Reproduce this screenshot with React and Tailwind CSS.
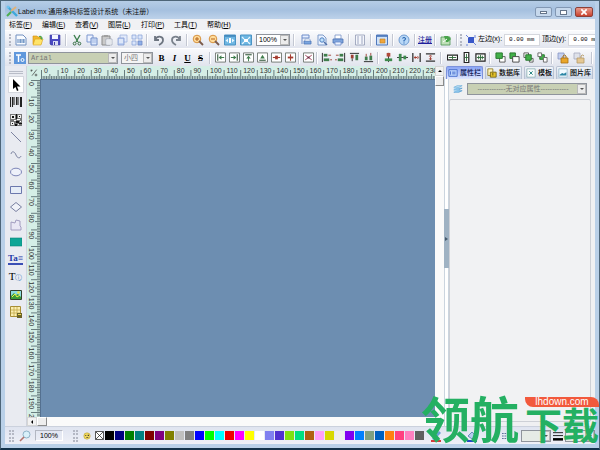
import React, { useState } from 'react';

const Svg = ({ children, className = 'w-3 h-3' }) => (
  <svg viewBox="0 0 12 12" className={`shrink-0 ${className}`} fill="none" aria-hidden="true">
    {children}
  </svg>
);

const page = <path d="M2 1h5l3 3v7H2z" fill="#eaf2ff" stroke="#7d9ac9" />;
const lens = <path d="M7 7l4 4" stroke="#7a5a4a" strokeWidth="1.8" />;

const icons = {
  logo: (
    <>
      <path d="M2 2l9 9" stroke="#3fa9dc" strokeWidth="2.4" />
      <path d="M10 2L5 6" stroke="#e0b27a" strokeWidth="2" />
      <path d="M5 7l-4 4" stroke="#4cae4f" strokeWidth="2" />
      <circle cx="2" cy="2" r="1.5" fill="#6ec2ee" />
    </>
  ),
  newLabel: (
    <>
      <path d="M1 1h7l3 3v7H1z" fill="#f8fbff" stroke="#7190c0" />
      <path d="M3 5v4M5 5v4M6 5v4M8 5v4M9 5v4" stroke="#2f66a8" strokeWidth=".8" />
    </>
  ),
  open: (
    <>
      <path d="M1 2h4l1 1h3v7H1z" fill="#f2b92d" stroke="#d08e12" strokeWidth=".6" />
      <path d="M3 5h8l-2 6H1z" fill="#ffe46a" stroke="#d9a01d" strokeWidth=".6" />
      <path d="M7 2q3-1 3 2l1-1-1 3-2-2h1q0-1-2-1z" fill="#4fa64b" />
    </>
  ),
  save: (
    <>
      <path d="M1 1h10v10H2l-1-1z" fill="#4a4ac2" stroke="#3a3aa0" strokeWidth=".6" />
      <path d="M3 1h6v4H3z" fill="#f3f5ff" />
      <path d="M4 7h5v4H4z" fill="#d7dcf4" />
      <path d="M5 8h1v3H5z" fill="#3a3aa0" />
    </>
  ),
  cut: (
    <>
      <path d="M3 1l4 7M9 1L5 8" stroke="#3d7f4e" strokeWidth="1.4" />
      <circle cx="3.6" cy="9.6" r="1.4" stroke="#356b43" />
      <circle cx="8.4" cy="9.6" r="1.4" stroke="#356b43" />
    </>
  ),
  copy: (
    <>
      <path d="M1 1h6v7H1z" fill="#eef3ff" stroke="#7c97cf" />
      <path d="M5 4h6v7H5z" fill="#dbe7fb" stroke="#6f8cc8" />
      <path d="M6 6h4M6 8h4" stroke="#8aa4d8" strokeWidth=".7" />
    </>
  ),
  paste: (
    <>
      <path d="M1 2h8v9H1z" fill="#c9c9c9" stroke="#8b8b8b" />
      <path d="M3 1h4v2H3z" fill="#a0a0a0" />
      <path d="M5 5h6v6H5z" fill="#fff" stroke="#9ba3b4" strokeWidth=".7" />
      <path d="M6 7h4M6 9h4" stroke="#aab3c4" strokeWidth=".6" />
    </>
  ),
  clone: (
    <>
      <path d="M4 1h7v7H4z" fill="#e2eafb" stroke="#9fb2dd" strokeWidth=".8" />
      <path d="M2 4h6v7H2z" fill="#bccff2" stroke="#839bd0" strokeWidth=".8" />
      <path d="M3 6h4M3 8h4" stroke="#fff" />
    </>
  ),
  grid: (
    <>
      <path d="M1 1h4v4H1zM7 1h4v4H7zM1 7h4v4H1z" fill="#dbe6fb" stroke="#8ea6d9" strokeWidth=".8" />
      <path d="M7 7h4v4H7z" fill="#8fb0e8" stroke="#7089c4" strokeWidth=".8" />
    </>
  ),
  undo: <path d="M2 2v4h4M2 6c2-5 8-4 8 0 0 3-2 4-4 5" stroke="#6d7580" strokeWidth="1.8" />,
  redo: <path d="M10 2v4H6M10 6C8 1 2 2 2 6c0 3 2 4 4 5" stroke="#7a828c" strokeWidth="1.8" />,
  zoomIn: (
    <>
      <circle cx="5" cy="5" r="3.8" fill="#ffdc9c" stroke="#d6923f" />
      <path d="M3 5h4M5 3v4" stroke="#b5651d" />
      {lens}
    </>
  ),
  zoomOut: (
    <>
      <circle cx="5" cy="5" r="3.8" fill="#ffdc9c" stroke="#d6923f" />
      <path d="M3 5h4" stroke="#b5651d" />
      {lens}
    </>
  ),
  fitPage: (
    <>
      <path d="M.5 1h11v10H.5z" fill="#6db6e2" stroke="#4b93c4" />
      <path d="M1 2h10" stroke="#2a6fa8" />
      <path d="M5 4h2v5H5z" fill="#fff" />
      <path d="M1.500 6.500L4 4.500v4zM10.500 6.500L8 4.500v4z" fill="#e6f6ff" />
    </>
  ),
  fitAll: (
    <>
      <path d="M.5 1h11v10H.5z" fill="#6db6e2" stroke="#4b93c4" />
      <path d="M4 5h4v3H4z" fill="#fff" />
      <path d="M2 3l2 2M10 3L8 5M2 10l2-2M10 10L8 8" stroke="#e6f6ff" strokeWidth="1.200" />
    </>
  ),
  pageSetup: (
    <>
      <path d="M2 1h7v3H2zM2 4v6" fill="#e6efff" stroke="#6c8cc9" />
      <path d="M4 7h7v3H4z" fill="#7ba6e0" stroke="#4e77b8" strokeWidth=".8" />
      <path d="M5 5h5v2H5z" fill="#fff" stroke="#7d9ac9" strokeWidth=".6" />
    </>
  ),
  preview: (
    <>
      {page}
      <circle cx="6" cy="6" r="2.200" fill="#bfe0fa" stroke="#4f7fc0" />
      <path d="M8 8l3 3" stroke="#4f6fa8" strokeWidth="1.400" />
    </>
  ),
  print: (
    <>
      <path d="M3 1h6v4H3z" fill="#fff" stroke="#7793c7" strokeWidth=".8" />
      <path d="M1 5h10v4H1z" fill="#7ea4dc" stroke="#4f74b4" strokeWidth=".8" />
      <path d="M3 8h6v3H3z" fill="#eaf2ff" stroke="#6c8cc9" strokeWidth=".8" />
    </>
  ),
  sheet: (
    <>
      <path d="M1.500 1h9v10h-9z" fill="#f4f6fb" stroke="#9099b4" strokeWidth=".8" />
      <path d="M3 3h2M7 3h2M3 5h2M7 5h2M3 7h2M7 7h2M3 9h2M7 9h2" stroke="#8b95b5" strokeWidth=".8" />
    </>
  ),
  windowIcon: (
    <>
      <path d="M.5 1h11v10H.5z" fill="#cfe2f8" stroke="#5079bd" />
      <path d="M1 2h10" stroke="#3e6cb5" strokeWidth="1.500" />
      <path d="M4 5h5v4H4z" fill="#f0a63d" stroke="#c47d1b" strokeWidth=".6" />
    </>
  ),
  help: (
    <>
      <circle cx="6" cy="6" r="5" fill="#b9d8f7" stroke="#6f9bd1" />
      <path d="M4.500 4.500q1.500-2 3 0 0 1.500-1.500 2v1M6 8.500v1" stroke="#2a67b1" strokeWidth="1.100" />
    </>
  ),
  exit: (
    <>
      <path d="M1 3h9v8H1z" fill="#bfe0b8" stroke="#4d9450" strokeWidth=".8" />
      <path d="M4 2h4l3 3-3 3H6z" fill="#49a34b" />
      <path d="M3 8l4-3" stroke="#fff" />
    </>
  ),
  position: (
    <>
      <path d="M3 3h6v6H3z" fill="#3857c9" />
      <path d="M1 1l3 3M9 9l2 2M1 11h2M10 1v3" stroke="#6d84d5" />
    </>
  ),
  font: (
    <>
      <path d="M0 0h12v12H0z" fill="#5f97dc" />
      <path d="M2 3h5M4.500 3v7" stroke="#fff" strokeWidth="1.400" />
      <circle cx="8.500" cy="8" r="1.500" stroke="#fff" />
    </>
  ),
  alignLeft: (
    <>
      <path d="M.5 1h11v10H.5z" fill="#fff" stroke="#6c746f" />
      <path d="M3 2.500v7" stroke="#355a3e" strokeWidth="1.200" />
      <path d="M4 6l3-2.500v5zM7 5.500h3v1H7z" fill="#3f7d4c" />
    </>
  ),
  alignRight: (
    <>
      <path d="M.5 1h11v10H.5z" fill="#fff" stroke="#6c746f" />
      <path d="M9 2.500v7" stroke="#355a3e" strokeWidth="1.200" />
      <path d="M8 6L5 3.500v5zM2 5.500h3v1H2z" fill="#3f7d4c" />
    </>
  ),
  alignTop: (
    <>
      <path d="M.5 1h11v10H.5z" fill="#fff" stroke="#6c746f" />
      <path d="M2.500 3h7" stroke="#355a3e" strokeWidth="1.200" />
      <path d="M6 4L3.500 7h5zM5.500 7h1v3h-1z" fill="#3f7d4c" />
    </>
  ),
  alignBottom: (
    <>
      <path d="M.5 1h11v10H.5z" fill="#fff" stroke="#6c746f" />
      <path d="M2.500 9h7" stroke="#355a3e" strokeWidth="1.200" />
      <path d="M6 3L3.500 7h5z" fill="#3f7d4c" />
    </>
  ),
  centerH: (
    <>
      <path d="M.5 1h11v10H.5z" fill="#fff" stroke="#6c746f" />
      <path d="M4.500 4h3v4h-3z" fill="#a53d30" />
      <path d="M2 6h8" stroke="#a53d30" strokeWidth="1.200" />
    </>
  ),
  centerV: (
    <>
      <path d="M.5 1h11v10H.5z" fill="#fff" stroke="#6c746f" />
      <path d="M3 5h6v2H3z" fill="#a53d30" />
      <path d="M6 2.500v7" stroke="#a53d30" strokeWidth="1.200" />
    </>
  ),
  centerBoth: (
    <>
      <path d="M.5 1h11v10H.5z" fill="#fff" stroke="#6c746f" />
      <path d="M2.500 3.500l7 5M9.500 3.500l-7 5" stroke="#9b3b57" />
      <path d="M5 5h2v2H5z" fill="#622940" />
    </>
  ),
  objLeft: (
    <>
      <path d="M1.500 1v10" stroke="#222" />
      <path d="M3 2h4v3H3z" fill="#3f7d4c" />
      <path d="M3 7h6v3H3z" fill="#3f7d4c" />
      <path d="M8 3.500h3M10 8.500h2" stroke="#9c3f34" />
    </>
  ),
  objRight: (
    <>
      <path d="M10.500 1v10" stroke="#222" />
      <path d="M5 2h4v3H5z" fill="#3f7d4c" />
      <path d="M3 7h6v3H3z" fill="#3f7d4c" />
      <path d="M1 3.500h3M0 8.500h2" stroke="#9c3f34" />
    </>
  ),
  objTop: (
    <>
      <path d="M1 1.500h10" stroke="#222" />
      <path d="M2 3h3v4H2z" fill="#9c3f34" />
      <path d="M7 3h3v6H7z" fill="#3f7d4c" />
      <path d="M3.500 7v3" stroke="#333" />
    </>
  ),
  objBottom: (
    <>
      <path d="M1 10.500h10" stroke="#222" />
      <path d="M2 5h3v4H2z" fill="#3f7d4c" />
      <path d="M7 4h3v5H7z" fill="#3f7d4c" />
      <path d="M3.500 2v3M8.500 1v3" stroke="#9c3f34" />
    </>
  ),
  midV: (
    <>
      <path d="M6 1v10" stroke="#333" />
      <path d="M4 1h4v4H4z" fill="#b0493b" />
      <path d="M2 7h8v3H2z" fill="#3f8a4e" />
    </>
  ),
  midH: (
    <>
      <path d="M0 6h12" stroke="#333" />
      <path d="M2 2h3v8H2z" fill="#3f8a4e" />
      <path d="M7 4h3v4H7z" fill="#3f8a4e" />
    </>
  ),
  spaceH: (
    <>
      <path d="M2 1v10M10 1v10" stroke="#333" strokeWidth="1.400" />
      <path d="M3 6l2-2v4zM9 6L7 4v4zM4 5.500h4v1H4z" fill="#a53d30" />
    </>
  ),
  spaceV: (
    <>
      <path d="M1 2h10M1 10h10" stroke="#333" strokeWidth="1.400" />
      <path d="M6 3L4 5h4zM6 9L4 7h4zM5.500 4h1v4h-1z" fill="#a53d30" />
    </>
  ),
  sameW: (
    <>
      <path d="M.5 3.500h11v5H.5z" fill="#fff" stroke="#222" strokeWidth="1.300" />
      <path d="M2 6h8M6 4v4" stroke="#2f6b3b" />
    </>
  ),
  sameH: (
    <>
      <path d="M3.500.5h5v11h-5z" fill="#fff" stroke="#222" strokeWidth="1.300" />
      <path d="M6 2v8M4 6h4" stroke="#2f6b3b" />
    </>
  ),
  sameBoth: (
    <>
      <path d="M1 2h10v8H1z" fill="#fff" stroke="#222" strokeWidth="1.300" />
      <path d="M2 6h8M6 3v6M4 4v4M8 4v4" stroke="#2f6b3b" />
    </>
  ),
  front: (
    <>
      <path d="M5 5h6v6H5z" fill="#fff" stroke="#555" />
      <path d="M1 1h7v6H1z" fill="#43b04a" stroke="#25752c" />
    </>
  ),
  back: (
    <>
      <path d="M1 1h6v6H1z" fill="#43b04a" stroke="#25752c" />
      <path d="M4 5h7v6H4z" fill="#fff" stroke="#444" />
    </>
  ),
  forward: (
    <>
      <path d="M1 1h5v5H1zM7 7h4v4H7z" fill="#fff" stroke="#555" />
      <path d="M3 3h6v6H3z" fill="#43b04a" stroke="#25752c" />
    </>
  ),
  backward: (
    <>
      <path d="M3 3h5v5H3z" fill="#43b04a" stroke="#25752c" />
      <path d="M1 1h4v4H1zM7 6h4v5H7z" fill="#fff" stroke="#666" />
    </>
  ),
  lock: (
    <>
      <path d="M1 1h6v6H1z" fill="#c4cfee" stroke="#8694c4" strokeWidth=".8" />
      <path d="M4 6h7v5H4z" fill="#e9a62a" stroke="#a76f12" strokeWidth=".8" />
      <path d="M6 6V4q1.500-2 3 0v2" stroke="#a76f12" />
    </>
  ),
  unlock: (
    <>
      <path d="M1 1h6v6H1z" fill="#dfe2ea" stroke="#a4aabf" strokeWidth=".8" />
      <path d="M4 6h7v5H4z" fill="#e5c894" stroke="#b59a68" strokeWidth=".8" />
      <path d="M8 6V4q1.500-2 3 0" stroke="#b59a68" />
    </>
  ),
  pointer: <path d="M3 0v10l2.500-2L7 12l1.500-.7L7 7.500h3.500z" fill="#000" />,
  barcode: <path d="M.5 1v10M2.500 1v10M4 1v8M6.500 1v8M8 1v8M10.500 1v10M11.500 1v10" stroke="#222" strokeWidth="1.100" />,
  qrcode: (
    <>
      <path d="M0 0h12v12H0z" fill="#777" />
      <path d="M1 1h4v4H1zM8 1h3v3H8zM1 8h3v3H1z" fill="#eee" />
      <path d="M2 2h2v2H2zM9 2h1v1H9zM2 9h1v1H2zM6 0h1v5H6zM6 7h3v2H6zM9 9h3v1H9zM5 10h2v2H5z" fill="#111" />
      <path d="M7 5h3v1H7zM10 7h1v1h-1zM4 6h2v1H4zM8 10h1v1H8z" fill="#fff" />
    </>
  ),
  line: <path d="M1 1l10 10" stroke="#6f7796" strokeWidth=".9" />,
  curve: <path d="M1 5c1-4 4-2 5 1s4 4 5 1" stroke="#6f7796" strokeWidth=".9" />,
  ellipse: <ellipse cx="6" cy="6" rx="5.500" ry="3.800" fill="#eef1fa" stroke="#7079b0" strokeWidth=".9" />,
  rect: <path d="M.5 2.500h11v7H.5z" fill="#e6edf7" stroke="#6c78ad" />,
  diamond: <path d="M6 1.500L11.500 6 6 10.500.5 6z" fill="#f0f2f8" stroke="#6b7396" strokeWidth=".9" />,
  polygon: <path d="M1 3l4 1 1-3 4 1v5l1 1v3H1z" fill="#e9e7f4" stroke="#9b95bb" strokeWidth=".9" />,
  fillRect: <path d="M0 2h12v8H0z" fill="#0fa596" stroke="#0b8478" strokeWidth=".6" />,
  table: (
    <>
      <path d="M.5.5h10v10H.5z" fill="#fbeeb0" stroke="#a88f35" />
      <path d="M1 4h9M1 7h9M4 1v9M7 1v9" stroke="#c3a94a" strokeWidth=".8" />
      <path d="M7 7h5v5H7z" fill="#6c6428" />
      <path d="M8 8h3v1H8z" fill="#f1dc55" />
    </>
  ),
  picture: (
    <>
      <path d="M.5 1.500h11v9H.5z" fill="#8edbe0" stroke="#30402d" />
      <path d="M1 10V7l3-3 2 2 2-1 3 3v2z" fill="#3b9c37" />
      <circle cx="8.500" cy="3.500" r="1.300" fill="#f2e43e" />
      <path d="M2 8l3-3 2 3 3-2" stroke="#eef34c" />
    </>
  ),
  panel: (
    <>
      <path d="M1 2h10v8H1z" fill="#b9d2fb" stroke="#3c64c8" />
      <path d="M3 4v4M5 5h4M5 7h4" stroke="#3c64c8" />
    </>
  ),
  database: (
    <>
      <path d="M1 1h6v8H1z" fill="#fff4bc" stroke="#8e7b22" />
      <path d="M4 5h7v6H4z" fill="#e3c22a" stroke="#6f5e12" />
      <path d="M7 6v3" stroke="#5a4b0a" />
    </>
  ),
  template: (
    <>
      <path d="M1 1h10v10H1z" fill="#f5fbfb" stroke="#8fb0b5" />
      <path d="M4 4l4 4M8 4L4 8" stroke="#2f8a87" strokeWidth="1.200" />
    </>
  ),
  gallery: (
    <>
      <path d="M1 1h10v10H1z" fill="#f1faff" stroke="#9bbccc" />
      <path d="M2 8l3-2 2 1 3-2v4H2z" fill="#2b86a5" />
    </>
  ),
  layers: (
    <>
      <path d="M1 4l4-2h6l-4 2z" fill="#bfe2f7" stroke="#5ba3d6" strokeWidth=".7" />
      <path d="M1 7l4-2h6l-4 2zM1 10l4-2h6l-4 2z" fill="#7fc0ea" stroke="#4a94cb" strokeWidth=".7" />
      <path d="M1 4v6h6V4z" fill="#93cbf0" opacity=".6" />
    </>
  ),
  magnifier: (
    <>
      <circle cx="7.500" cy="4.500" r="3.500" fill="#d8f0fa" stroke="#8fb4c9" />
      <path d="M5 7l-4 4" stroke="#b4716a" strokeWidth="1.600" />
    </>
  ),
  palette: (
    <>
      <circle cx="6" cy="6" r="4.800" fill="#efd95e" stroke="#b6982f" strokeWidth=".8" />
      <path d="M3 5h2v1H3zM7 4h2v2H7zM5 8h3v1H5z" fill="#4a4230" />
    </>
  ),
  pen: (
    <>
      <path d="M2 9l7-8 2 2-7 7z" fill="#6aa0d8" />
      <path d="M1 10h10v2H1z" fill="#d43c3c" />
    </>
  ),
  bucket: (
    <>
      <path d="M2 6l4-4 4 4-4 3z" fill="#b6cdee" stroke="#6d8dbc" />
      <path d="M1 10h10v2H1z" fill="#2548c4" />
    </>
  ),
};

const Icon = ({ name, className }) => <Svg className={className}>{icons[name]}</Svg>;

const Sep = ({ className = 'mx-0.5' }) => (
  <span className={`h-3 w-0.5 shrink-0 border-l border-[#c3c7d2] bg-white ${className}`} />
);

const Grip = () => <span className="h-3 w-0.5 mr-px shrink-0 border-l-2 border-dotted border-[#b4b8c4]" />;

const ToolButton = ({ name, label, width = 'w-4' }) => (
  <button type="button" aria-label={label || name} className={`flex h-4 shrink-0 items-center justify-center hover:bg-white ${width}`}>
    <Icon name={name} className={width === 'w-[14px]' ? 'w-[11px] h-[11px]' : 'w-3 h-3'} />
  </button>
);

const Group = ({ items, width, className = '' }) => (
  <div className={`flex shrink-0 ${className}`}>
    {items.map((name) => (
      <ToolButton key={name} name={name} width={width} />
    ))}
  </div>
);

const Select = ({ label, options, className, selectClass }) => (
  <div className={`relative shrink-0 ${className}`}>
    <select
      aria-label={label}
      className={`block h-3 w-full appearance-none border border-[#8f949c] pl-0.5 outline-none ${selectClass}`}
    >
      {options.map((o) => (
        <option key={o}>{o}</option>
      ))}
    </select>
    <span className="pointer-events-none absolute inset-y-px right-px flex w-[9px] items-center justify-center border border-[#b9b9b9] bg-[#ececec]">
      <span className="border-x-2 border-t-2 border-x-transparent border-t-[#555]" />
    </span>
  </div>
);

const menus = [
  ['标签', 'F'],
  ['编辑', 'E'],
  ['查看', 'V'],
  ['图层', 'L'],
  ['打印', 'P'],
  ['工具', 'T'],
  ['帮助', 'H'],
];

const tools = ['pointer', 'barcode', 'qrcode', 'line', 'curve', 'ellipse', 'rect', 'diamond', 'polygon', 'fillRect', 'richText', 'text', 'picture', 'table'];

const tabs = [
  { icon: 'panel', label: '属性栏' },
  { icon: 'database', label: '数据库' },
  { icon: 'template', label: '模板' },
  { icon: 'gallery', label: '图片库' },
];

const swatches = [
  '#000000', '#000080', '#008000', '#008080', '#800000', '#800080', '#808000', '#c0c0c0',
  '#808080', '#0000ff', '#00ff00', '#00ffff', '#f00000', '#ff00ff', '#ffff00', '#ffffff',
  '#8080f0', '#5030d0', '#80e010', '#00e080', '#b06010', '#ffa0f8', '#d8d800', '#eeeeee',
  '#8000f0', '#0080ff', '#80a080', '#0060c0', '#ff8010', '#ff4080', '#ff80c0', '#606060',
];

// pixels for every 10 mm on the rulers
const STEP = 16.6;

const rulerTicks = (count) =>
  Array.from({ length: count * 10 }, (_, i) => {
    const pos = 1.5 + (i * STEP) / 10;
    const len = i % 10 === 0 ? 9 : i % 5 === 0 ? 5 : 3;
    return { pos, len };
  });

const HorizontalRuler = () => (
  <svg className="h-[13px] min-w-0 flex-1 bg-[#d5eee6]" aria-hidden="true">
    {rulerTicks(60).map(({ pos, len }) => (
      <path key={pos} d={`M${pos} 13V${13 - len}`} stroke="#4b5f63" strokeWidth=".8" />
    ))}
    {Array.from({ length: 24 }, (_, i) => (
      <text key={i} x={i * STEP + 4} y="7" fontSize="7" fill="#333">
        {i * 10}
      </text>
    ))}
  </svg>
);

const VerticalRuler = () => (
  <svg className="w-[13px] shrink-0 self-stretch bg-[#d5eee6]" aria-hidden="true">
    {rulerTicks(60).map(({ pos, len }) => (
      <path key={pos} d={`M13 ${pos}H${13 - len}`} stroke="#4b5f63" strokeWidth=".8" />
    ))}
    {Array.from({ length: 21 }, (_, i) => (
      <text key={i} transform={`translate(2 ${i * STEP + 3}) rotate(90)`} fontSize="7" fill="#333">
        {i * 10}
      </text>
    ))}
  </svg>
);

const TitleBar = () => (
  <header className="flex h-[18px] shrink-0 items-start bg-gradient-to-b from-[#b5cde6] via-[#a5c0df] to-[#bdd2ea] pl-px">
    <Icon name="logo" className="mt-1 w-3 h-3" />
    <h1 className="mt-[5px] flex-1 text-[7px] leading-3 text-[#111]">Label mx 通用条码标签设计系统（未注册）</h1>
    <div className="mt-1.5 mr-0.5 flex gap-[3px]">
      <button type="button" aria-label="最小化" className="flex h-2.5 w-[17px] items-center justify-center rounded-xs border border-[#8197b3] bg-[#c6d8ec]">
        <span className="h-[3px] w-[7px] border border-[#65758a] bg-white" />
      </button>
      <button type="button" aria-label="最大化" className="flex h-2.5 w-[17px] items-center justify-center rounded-xs border border-[#8197b3] bg-[#c6d8ec]">
        <span className="h-[5px] w-[7px] border border-[#65758a] bg-white" />
      </button>
      <button type="button" aria-label="关闭" className="flex h-2.5 w-[18px] items-center justify-center rounded-xs border border-[#8c4038] bg-gradient-to-b from-[#e79a8c] to-[#c93f2c]">
        <Svg className="w-2 h-2">
          <path d="M2 2l8 8M10 2l-8 8" stroke="#fff" strokeWidth="2.500" />
        </Svg>
      </button>
    </div>
  </header>
);

const MenuBar = () => (
  <nav className="flex h-[11px] shrink-0 items-center gap-2.5 bg-[#f0f1f4] pl-1 text-[7px] leading-[11px]">
    {menus.map(([label, key]) => (
      <button key={key} type="button" className="w-[23px] text-left whitespace-nowrap">
        {label}(<span className="underline">{key}</span>)
      </button>
    ))}
  </nav>
);

const MainToolbar = () => (
  <div className="flex h-[18px] shrink-0 items-center overflow-hidden border-t border-white bg-gradient-to-b from-[#fafbfd] to-[#e2e5ee] pl-1">
    <Grip />
    <Group items={['newLabel', 'open', 'save']} width="w-[17px]" />
    <Sep />
    <Group items={['cut', 'copy', 'paste', 'clone', 'grid']} width="w-[15px]" />
    <Sep />
    <Group items={['undo', 'redo']} width="w-[17px]" />
    <Sep />
    <Group items={['zoomIn', 'zoomOut', 'fitPage', 'fitAll']} width="w-4" />
    <Select label="缩放" options={['100%', '200%']} className="ml-0.5 w-[34px]" selectClass="bg-white text-[7px] leading-[10px]" />
    <Sep className="mx-[3px]" />
    <Group items={['pageSetup', 'preview', 'print']} width="w-4" />
    <Sep />
    <Group items={['sheet']} width="w-4" />
    <Sep />
    <Group items={['windowIcon']} width="w-4" />
    <Sep />
    <Group items={['help']} width="w-4" />
    <Sep />
    <button type="button" className="shrink-0 text-[7px] leading-3 font-medium text-[#1e1e9c] underline">注册</button>
    <Sep />
    <Group items={['exit']} width="w-4" />
    <Sep />
    <Grip />
    <Group items={['position']} width="w-[15px]" />
    <label className="flex shrink-0 items-center gap-0.5 text-[7px]">
      左边(x):
      <input defaultValue="0.00 mm" className="h-3 w-[36px] border border-[#d5d7dd] bg-white pl-1 font-['Liberation_Mono',monospace] text-[6px]" />
    </label>
    <label className="ml-0.5 flex min-w-0 flex-1 items-center gap-0.5 text-[7px] whitespace-nowrap">
      顶边(y):
      <input defaultValue="0.00 mm" className="h-3 w-[36px] min-w-0 border border-r-0 border-[#d5d7dd] bg-white pl-1 font-['Liberation_Mono',monospace] text-[6px]" />
    </label>
  </div>
);

const FormatToolbar = () => (
  <div className="flex h-[18px] shrink-0 items-center overflow-hidden border-t border-white bg-gradient-to-b from-[#f8f9fc] to-[#e1e4ed] pl-1">
    <Grip />
    <Group items={['font']} width="w-4" />
    <Select
      label="字体"
      options={['Arial', 'Verdana']}
      className="w-[90px]"
      selectClass="bg-[#c8d0b4] font-['Liberation_Mono',monospace] text-[7px] leading-[10px] text-[#777]"
    />
    <Select label="字号" options={['小四', '四号']} className="ml-[3px] w-[32px]" selectClass="bg-[#f4f4f4] text-[7px] leading-[10px] text-[#777]" />
    <div className="ml-0.5 flex shrink-0 font-['Liberation_Serif',serif] text-[9px] leading-4 font-bold">
      <button type="button" className="w-[13px]">B</button>
      <button type="button" className="w-[13px] italic">I</button>
      <button type="button" className="w-[13px] underline">U</button>
      <button type="button" className="w-[13px] line-through">S</button>
    </div>
    <Sep />
    <Group items={['alignLeft', 'alignRight', 'alignTop', 'alignBottom', 'centerH', 'centerV']} width="w-[14px]" />
    <Sep className="mx-px" />
    <Group items={['centerBoth']} width="w-[14px]" />
    <Sep className="mx-px" />
    <Group items={['objLeft', 'objRight', 'objTop', 'objBottom']} width="w-[14px]" />
    <Sep />
    <Group items={['midV', 'midH', 'spaceH', 'spaceV']} width="w-[14px]" />
    <Sep className="mx-[3px]" />
    <Group items={['sameW', 'sameH', 'sameBoth']} width="w-[14px]" />
    <Sep />
    <Group items={['front', 'back', 'forward', 'backward']} width="w-[14px]" />
    <Sep />
    <Group items={['lock', 'unlock']} width="w-4" />
    <Sep className="mx-1" />
  </div>
);

const ToolBox = () => {
  const [active, setActive] = useState('pointer');

  return (
    <aside className="flex w-[22px] shrink-0 flex-col items-center border-r border-[#cfd3dc] bg-[#e9ebf1] pt-[5px]">
      <span className="mb-0.5 h-[3px] w-3.5 shrink-0 border-y border-[#b9bdc8]" />
      <div className="flex h-[245px] shrink-0 flex-col justify-between">
        {tools.map((tool) => (
          <button
            key={tool}
            type="button"
            aria-label={tool}
            onClick={() => setActive(tool)}
            className={`flex h-[17px] w-4 items-center justify-center border font-['Liberation_Serif',serif] ${
              active === tool ? 'border-[#d4d7de] bg-white' : 'border-transparent'
            }`}
          >
            {tool === 'richText' ? (
              <span className="border-b-2 border-double border-[#3a4fb5] text-[9px] leading-[9px] font-bold text-[#2439a8]">Ta≡</span>
            ) : tool === 'text' ? (
              <span className="text-[11px] leading-3 text-black">
                T<span className="text-[7px] text-[#4a86c0]">ⓘ</span>
              </span>
            ) : (
              <Icon name={tool} className="w-3 h-3" />
            )}
          </button>
        ))}
      </div>
    </aside>
  );
};

const Workspace = () => (
  <section className="flex min-w-0 flex-1 flex-col bg-[#fafafa]">
    <div className="flex min-h-0 flex-1">
      <div className="flex min-w-0 flex-1 flex-col">
        <div className="flex shrink-0">
          <div className="flex h-[13px] w-[13px] shrink-0 items-center justify-center bg-[#d5eee6]">
            <Svg className="w-2 h-2">
              <path d="M1 2h3M2 1v3M10 1L3 10M7 9h4M9 7v4" stroke="#333" />
            </Svg>
          </div>
          <HorizontalRuler />
        </div>
        <div className="flex min-h-0 flex-1">
          <VerticalRuler />
          <div className="flex-1 border-t border-l border-[#54708f] bg-[#6d8eb1]" />
        </div>
      </div>
      <div className="flex w-[9px] shrink-0 flex-col">
        <button type="button" aria-label="向上滚动" className="flex h-2.5 items-center justify-center border border-[#d5d5d5] bg-[#f2f2f2]">
          <span className="border-x-2 border-b-2 border-x-transparent border-b-black" />
        </button>
        <span className="h-2.5 border border-t-white border-l-white border-r-[#8b8b8b] border-b-[#8b8b8b] bg-[#eee]" />
      </div>
    </div>
    <div className="flex h-[9px] shrink-0">
      <button type="button" aria-label="向左滚动" className="flex w-2.5 items-center justify-center border border-[#d5d5d5] bg-[#f2f2f2]">
        <span className="border-y-2 border-r-2 border-y-transparent border-r-black" />
      </button>
      <span className="w-2.5 border border-t-white border-l-white border-r-[#8b8b8b] border-b-[#8b8b8b] bg-[#eee]" />
    </div>
  </section>
);

const PropertyPanel = () => {
  const [active, setActive] = useState('属性栏');

  return (
    <aside className="flex w-[151px] shrink-0 flex-col bg-[#eff0f2]">
      <div role="tablist" className="flex h-[13px] shrink-0 gap-0.5 bg-[#e3e7ef] pl-0.5">
        {tabs.map(({ icon, label }) => (
          <button
            key={label}
            type="button"
            role="tab"
            aria-selected={active === label}
            onClick={() => setActive(label)}
            className={`flex items-center gap-0.5 rounded-t-xs border border-b-0 px-px text-[7px] leading-3 font-medium whitespace-nowrap ${
              active === label
                ? 'border-[#7d92dc] bg-gradient-to-b from-[#8ca5f5] to-[#dfe6fd] text-[#101a55]'
                : 'border-[#b9c2d2] bg-gradient-to-b from-[#f0f4fa] to-[#ccd6e5] text-black'
            }`}
          >
            <Icon name={icon} className="w-2.5 h-2.5" />
            {label}
          </button>
        ))}
      </div>
      <div className="flex min-h-0 flex-1">
        <button type="button" aria-label="折叠面板" className="flex w-[5px] shrink-0 flex-col items-center justify-center border-x border-[#cbd5df] bg-white pb-7">
          <span className="flex h-[59px] w-[5px] items-center justify-center bg-[#9fb2c3]">
            <span className="border-y-2 border-l-[3px] border-y-transparent border-l-[#465a6c]" />
          </span>
        </button>
        <div className="flex min-w-0 flex-1 flex-col pr-1 pb-1">
          <div className="flex shrink-0 items-center gap-1 py-1 pr-1 pl-1">
            <Icon name="layers" className="w-[10px] h-[10px]" />
            <Select
              label="属性"
              options={['------------无对应属性------------']}
              className="min-w-0 flex-1"
              selectClass="bg-[#c8d0b4] pr-2.5 text-center text-[7px] leading-[10px] text-[#777]"
            />
          </div>
          <div className="flex-1 rounded-xs border border-[#cdd0d6] bg-[#f1f2f3]" />
        </div>
      </div>
    </aside>
  );
};

const StatusBar = () => (
  <footer className="flex h-[18px] shrink-0 items-center overflow-hidden border-t border-[#cbd1dd] bg-gradient-to-b from-[#dfe4f0] to-[#eef0f7] pl-1">
    <Grip />
    <Grip />
    <span className="ml-1 flex">
      <Icon name="magnifier" className="w-3 h-3" />
    </span>
    <span className="ml-1 w-[28px] shrink-0 border border-t-[#b3b7c2] border-l-[#b3b7c2] border-r-white border-b-white text-center text-[7px] leading-[9px]">
      100%
    </span>
    <span className="ml-2.5 flex">
      <Grip />
      <Grip />
    </span>
    <span className="mx-1 flex">
      <Icon name="palette" className="w-2 h-2" />
    </span>
    <div className="flex shrink-0 gap-px">
      <button type="button" aria-label="无颜色" className="h-[9px] w-[9px]">
        <Svg className="w-[9px] h-[9px]">
          <path d="M.7.7h10.600v10.600H.7zM1 1l10 10M11 1L1 11" fill="#fff" stroke="#222" />
        </Svg>
      </button>
      {swatches.map((color) => (
        <button key={color} type="button" aria-label={color} className="h-[9px] w-[9px]" style={{ backgroundColor: color }} />
      ))}
    </div>
    <div className="ml-1.5 flex flex-1 items-center gap-6">
      <Icon name="pen" className="w-3 h-3" />
      <Icon name="bucket" className="w-3 h-3" />
      <Svg className="w-2.5 h-2.5">
        <path d="M0 3h12M0 6h12M0 9h12" stroke="#44598c" strokeDasharray="2 1" />
      </Svg>
    </div>
    <Select label="线型" options={['']} className="w-[30px]" selectClass="bg-[#e6ebe6] text-[7px]" />
    <Svg className="mx-0.5 w-2.5 h-2.5">
      <path d="M0 2h12M0 5.500h12" stroke="#000" />
      <path d="M0 10h12" stroke="#000" strokeWidth="3" />
    </Svg>
    <Select label="线宽" options={['']} className="w-[30px]" selectClass="bg-[#e6ebe6] text-[7px]" />
  </footer>
);

const Watermark = () => (
  <div className="pointer-events-none absolute right-0 bottom-0.5 flex items-end gap-1.5 font-bold whitespace-nowrap text-[#24b062]">
    <span className="text-[49px] leading-[49px]">领航</span>
    <span className="flex flex-col items-end gap-0.5">
      <span className="h-2.5 w-full rounded-tr-lg rounded-bl-lg bg-[#f2593c] text-center text-[10px] leading-[10px] font-normal text-white">
        lhdown.com
      </span>
      <span className="text-[37px] leading-[37px]">下载</span>
    </span>
  </div>
);

const App = () => {
  return (
    <div className="relative flex h-screen flex-col overflow-hidden border-x border-t border-[#4d6578] border-b-2 border-b-[#12324a] bg-[#b9d0e8] px-1 pb-1 font-['Liberation_Sans','Noto_Sans_CJK_SC',sans-serif] text-black">
      <TitleBar />
      <MenuBar />
      <MainToolbar />
      <FormatToolbar />
      <main className="flex min-h-0 flex-1">
        <ToolBox />
        <Workspace />
        <PropertyPanel />
      </main>
      <StatusBar />
      <Watermark />
    </div>
  );
};

export default App;
